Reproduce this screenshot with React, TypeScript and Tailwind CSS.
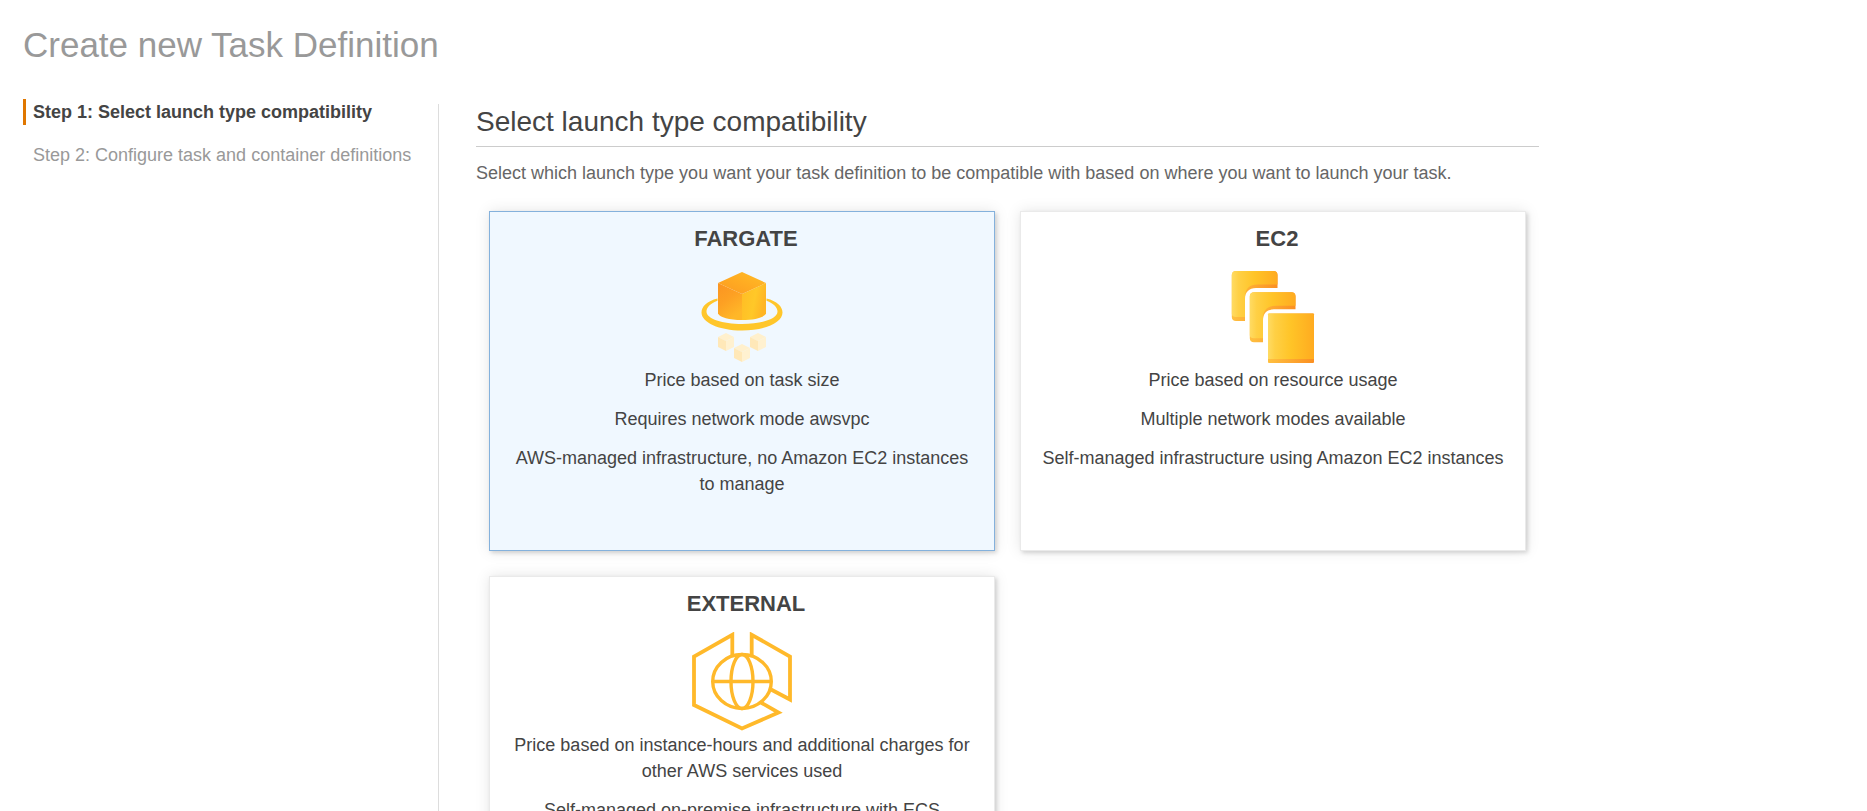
import type { ReactNode } from "react";

function FargateIcon() {
  return (
    <svg viewBox="0 0 100 100" className="size-[100px]" aria-hidden="true">
      <defs>
        <linearGradient id="fg-right" x1="0" y1="0" x2="1" y2="0.3">
          <stop offset="0" stopColor="#ffbc25" />
          <stop offset="0.6" stopColor="#ffc828" />
          <stop offset="1" stopColor="#ffb524" />
        </linearGradient>
        <linearGradient id="fg-left" x1="0" y1="0" x2="0.5" y2="1">
          <stop offset="0" stopColor="#fb9422" />
          <stop offset="0.5" stopColor="#fda023" />
          <stop offset="1" stopColor="#ffb728" />
        </linearGradient>
        <linearGradient id="fg-top" x1="0" y1="1" x2="1" y2="0">
          <stop offset="0" stopColor="#fc9a22" />
          <stop offset="0.5" stopColor="#ffab22" />
          <stop offset="1" stopColor="#ffbe26" />
        </linearGradient>
      </defs>
      <path
        d="M25.5 31.5C15 34 9.500 39.500 9.500 45.500C9.500 55.500 27 63.500 50 63.500S90.500 55.500 90.500 45.500C90.500 39.500 85 34 74.500 31.500V33.800C81.500 36.500 85.500 40.500 85.500 44.500C85.500 52 69.500 57 50 57S14.500 52 14.500 44.500C14.500 40.500 18.500 36.500 25.500 33.800Z"
        fill="#ffc62b"
      />
      <path d="M26 16L50 27V53C37 53 28 50.500 26 46.500Z" fill="url(#fg-left)" />
      <path d="M74 16L50 27V53C63 53 72 50.500 74 46.500Z" fill="url(#fg-right)" />
      <path d="M50 5L74 16L50 27L26 16Z" fill="url(#fg-top)" />
      {[
        [34, 66],
        [66, 66],
        [50, 77],
      ].map(([x, y]) => (
        <g key={x} transform={`translate(${x} ${y})`}>
          <path d="M0 0L8 4L0 8L-8 4Z" fill="#fff0cd" />
          <path d="M-8 4L0 8V18L-8 14Z" fill="#ffe8b8" />
          <path d="M8 4L0 8V18L8 14Z" fill="#fff1d0" />
        </g>
      ))}
    </svg>
  );
}

function Ec2Icon() {
  return (
    <svg viewBox="0 0 100 100" className="size-[100px]" aria-hidden="true">
      <defs>
        <linearGradient id="ec-face" x1="0" y1="0" x2="1" y2="0">
          <stop offset="0" stopColor="#ffdb63" />
          <stop offset="0.15" stopColor="#ffd045" />
          <stop offset="0.5" stopColor="#ffc427" />
          <stop offset="1" stopColor="#ffab20" />
        </linearGradient>
        <linearGradient id="ec-edge" x1="0" y1="0" x2="1" y2="0">
          <stop offset="0" stopColor="#ffc040" />
          <stop offset="1" stopColor="#fb8f22" />
        </linearGradient>
      </defs>
      {[0, 1].map((i) => (
        <g key={i} transform={`translate(${i * 18} ${i * 21.3})`}>
          <path
            d="M13 4H50.500C53 4 54.500 5.500 54.500 8V21H33C26 21 22 25 22 32V54H13C10.500 54 8.800 52.500 8.800 50V8C8.800 5.500 10.500 4 13 4Z"
            fill="url(#ec-edge)"
          />
          <path
            d="M13 4H50.500C53 4 54.500 5.500 54.500 8V17.500H35C26 17.500 22 22 22 30V50H13C10.500 50 8.800 49 8.800 47V8C8.800 5.500 10.500 4 13 4Z"
            fill="url(#ec-face)"
          />
        </g>
      ))}
      <rect x="45" y="46.500" width="46" height="49.500" rx="1" fill="url(#ec-edge)" />
      <path d="M46 46.500H90Q91 46.500 91 47.500V92H45V47.500Q45 46.500 46 46.500Z" fill="url(#ec-face)" />
    </svg>
  );
}

function ExternalIcon() {
  return (
    <svg viewBox="0 0 100 100" className="size-[100px]" fill="none" stroke="#ffb92a" aria-hidden="true">
      <g strokeWidth="3.800">
        <path d="M40.300 23.500V2.800L2 24.500V73L50 96.500L86.500 80.500L69 70.500" />
        <path d="M59.700 23.500V2.800L98 24.500V67.500L79 57.500" />
      </g>
      <g strokeWidth="3.400">
        <ellipse cx="50" cy="49.500" rx="29.300" ry="27" />
        <ellipse cx="50" cy="49.500" rx="11" ry="27" />
        <path d="M20.500 49.500H79.500" />
      </g>
    </svg>
  );
}

type LaunchType = { name: string; icon: ReactNode; facts: string[] };

const launchTypes: LaunchType[] = [
  {
    name: "FARGATE",
    icon: <FargateIcon />,
    facts: [
      "Price based on task size",
      "Requires network mode awsvpc",
      "AWS-managed infrastructure, no Amazon EC2 instances to manage",
    ],
  },
  {
    name: "EC2",
    icon: <Ec2Icon />,
    facts: [
      "Price based on resource usage",
      "Multiple network modes available",
      "Self-managed infrastructure using Amazon EC2 instances",
    ],
  },
  {
    name: "EXTERNAL",
    icon: <ExternalIcon />,
    facts: [
      "Price based on instance-hours and additional charges for other AWS services used",
      "Self-managed on-premise infrastructure with ECS Anywhere",
    ],
  },
];

function LaunchCard({ type, selected }: { type: LaunchType; selected: boolean }) {
  return (
    <label className="relative flex min-h-[340px] cursor-pointer flex-col items-center border border-[#eaeaea] bg-white px-5 pt-[11px] pb-5 text-center text-[#444] shadow-[2px_2px_4px_rgba(0,0,0,0.14),0_0_14px_rgba(0,0,0,0.1)] has-checked:border-[#84b1dc] has-checked:bg-[#f0f8ff]">
      <input type="radio" name="launch-type" defaultChecked={selected} className="sr-only" />
      <span className="pl-2 text-[22px] leading-8 font-bold">{type.name}</span>
      <span className="mt-3">{type.icon}</span>
      <span className="flex flex-col gap-[13px]">
        {type.facts.map((fact) => (
          <span key={fact}>{fact}</span>
        ))}
      </span>
    </label>
  );
}

export default function App() {
  return (
    <div className="flex h-screen flex-col overflow-hidden bg-white pl-[23px] font-['Liberation_Sans',Arial,sans-serif] text-[18px] leading-[26px] text-[#666]">
      <h1 className="pt-6 text-[35px] leading-[42px] text-[#999]">Create new Task Definition</h1>
      <div className="flex grow pt-[33px]">
        <nav className="w-[415px] shrink-0" aria-label="Steps">
          <ol className="flex flex-col gap-[17px]">
            <li className="border-l-3 border-[#e07700] pl-[7px] font-bold text-[#444]" aria-current="step">
              Step 1: Select launch type compatibility
            </li>
            <li className="pl-[10px] text-[#999]">Step 2: Configure task and container definitions</li>
          </ol>
        </nav>
        <main className="mt-[5px] max-w-[1101px] grow border-l border-[#ddd] pl-[37px]">
          <h2 className="border-b border-[#ccc] pb-1.5 text-[28px] leading-[36px] text-[#444]">
            Select launch type compatibility
          </h2>
          <p className="pt-[13px]">
            Select which launch type you want your task definition to be compatible with based on where you want to
            launch your task.
          </p>
          <div className="grid grid-cols-2 gap-[25px] px-[13px] pt-[25px]">
            {launchTypes.map((type) => (
              <LaunchCard key={type.name} type={type} selected={type.name === "FARGATE"} />
            ))}
          </div>
        </main>
      </div>
    </div>
  );
}
